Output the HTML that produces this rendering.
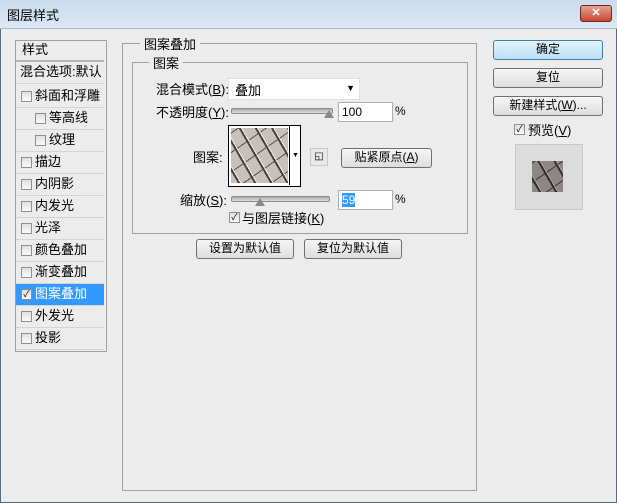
<html><head><style>
body{margin:0;width:617px;height:503px;overflow:hidden;background:#ececec;font-family:"Liberation Sans","Noto Sans CJK SC",sans-serif;font-size:12px;color:#000;position:relative}
.a{position:absolute}
.title{left:0;top:0;width:617px;height:28px;background:linear-gradient(#c9dbee,#dbe7f4);border-bottom:1px solid #aab9c9}
.win{left:0;top:0;width:615px;height:501px;border:1px solid #5a6a7a}
.btn{position:absolute;height:18px;border:1px solid #707070;border-radius:3px;background:linear-gradient(#f6f6f6,#dedede);text-align:center;line-height:17px;font-size:12px}
.cb{position:absolute;width:9px;height:9px;border:1px solid #8e8f8f;background:linear-gradient(#e0e0e0,#fafafa)}
.li{position:absolute;left:16px;width:88px;height:21px;border-bottom:1px solid #d4d4d4;line-height:20px}
.grp{position:absolute;border:1px solid #a0a0a0}
.lg{position:absolute;background:#ececec;padding:0 4px;font-size:13px}
.pat{background-color:#c9c0bb;background-image:repeating-linear-gradient(60deg,transparent 0 6px,#4a403b 6px 8px,#f2eeea 8px 9px,transparent 9px 14px),repeating-linear-gradient(-35deg,transparent 0 9px,#5a4f4a 9px 10px,transparent 10px 16px)}
.sl{position:absolute;height:4px;border:1px solid #8a8a8a;border-radius:2px;background:linear-gradient(#aaa,#ddd)}
.inp{position:absolute;height:18px;background:#fff;border:1px solid #abadb3;line-height:18px;padding-left:3px}
</style></head><body>
<div class="a win"></div>
<div class="a title"></div>
<div class="a" style="left:7px;top:5px;font-size:13px">图层样式</div>
<div class="a" style="left:580px;top:5px;width:30px;height:15px;border:1px solid #6b2a22;border-radius:3px;background:linear-gradient(#e8a293,#c8452f);color:#fff;text-align:center;line-height:15px;font-weight:bold;font-size:11px">✕</div>

<div class="a" style="left:15px;top:40px;width:90px;height:310px;border:1px solid #a0a0a0;background:#ececec"></div>
<div class="li" style="top:40px;padding-left:6px;width:82px;border-bottom:2px solid #b5b5b5;height:20px;font-size:13px">样式</div>
<div class="li" style="top:62px;padding-left:4px;width:84px;font-size:13px">混合选项:默认</div>
<div class="li" style="top:86px"><span class="cb" style="left:5px;top:5px"></span><span style="position:absolute;left:19px;font-size:13px">斜面和浮雕</span></div>
<div class="li" style="top:108px"><span class="cb" style="left:19px;top:5px"></span><span style="position:absolute;left:33px;font-size:13px">等高线</span></div>
<div class="li" style="top:130px"><span class="cb" style="left:19px;top:5px"></span><span style="position:absolute;left:33px;font-size:13px">纹理</span></div>
<div class="li" style="top:152px"><span class="cb" style="left:5px;top:5px"></span><span style="position:absolute;left:19px;font-size:13px">描边</span></div>
<div class="li" style="top:174px"><span class="cb" style="left:5px;top:5px"></span><span style="position:absolute;left:19px;font-size:13px">内阴影</span></div>
<div class="li" style="top:196px"><span class="cb" style="left:5px;top:5px"></span><span style="position:absolute;left:19px;font-size:13px">内发光</span></div>
<div class="li" style="top:218px"><span class="cb" style="left:5px;top:5px"></span><span style="position:absolute;left:19px;font-size:13px">光泽</span></div>
<div class="li" style="top:240px"><span class="cb" style="left:5px;top:5px"></span><span style="position:absolute;left:19px;font-size:13px">颜色叠加</span></div>
<div class="li" style="top:262px"><span class="cb" style="left:5px;top:5px"></span><span style="position:absolute;left:19px;font-size:13px">渐变叠加</span></div>
<div class="li" style="top:284px;background:#3399ff;color:#fff"><span class="cb" style="left:5px;top:5px;color:#000;font-size:9px;line-height:9px;text-align:center">✓</span><span style="position:absolute;left:19px;font-size:13px">图案叠加</span></div>
<div class="li" style="top:306px"><span class="cb" style="left:5px;top:5px"></span><span style="position:absolute;left:19px;font-size:13px">外发光</span></div>
<div class="li" style="top:328px"><span class="cb" style="left:5px;top:5px"></span><span style="position:absolute;left:19px;font-size:13px">投影</span></div>

<div class="grp" style="left:122px;top:43px;width:353px;height:446px"></div>
<div class="lg" style="left:140px;top:34px">图案叠加</div>
<div class="grp" style="left:132px;top:62px;width:334px;height:170px"></div>
<div class="lg" style="left:149px;top:53px">图案</div>

<div class="a" style="left:156px;top:79px;font-size:13px">混合模式(<u>B</u>):</div>
<div class="a" style="left:228px;top:78px;width:130px;height:20px;background:#fff;border:1px solid #e0e0e0"><span style="position:absolute;left:6px;top:1px;font-size:13px">叠加</span><span style="position:absolute;right:4px;top:4px;font-size:9px">▼</span></div>
<div class="a" style="left:156px;top:102px;font-size:13px">不透明度(<u>Y</u>):</div>
<div class="sl" style="left:231px;top:108px;width:100px"></div>
<div class="a" style="left:324px;top:110px;width:0;height:0;border-left:5px solid transparent;border-right:5px solid transparent;border-bottom:8px solid #888"></div>
<div class="inp" style="left:338px;top:102px;width:50px">100</div>
<div class="a" style="left:395px;top:104px">%</div>

<div class="a" style="left:193px;top:147px;font-size:13px">图案:</div>
<div class="a" style="left:228px;top:125px;width:71px;height:60px;border:1px solid #000;background:#fff"></div>
<div class="a pat" style="left:231px;top:128px;width:57px;height:55px"></div>
<div class="a" style="left:289px;top:126px;width:1px;height:59px;background:#000"></div>
<div class="a" style="left:292px;top:152px;font-size:7px">▼</div>
<div class="a" style="left:310px;top:148px;width:16px;height:16px;border:1px solid #c8c8c8;background:#e8e8e8;text-align:center;font-size:10px;line-height:16px">◱</div>
<div class="btn" style="left:341px;top:148px;width:89px">贴紧原点(<u>A</u>)</div>

<div class="a" style="left:180px;top:190px;font-size:13px">缩放(<u>S</u>):</div>
<div class="sl" style="left:231px;top:196px;width:97px"></div>
<div class="a" style="left:255px;top:198px;width:0;height:0;border-left:5px solid transparent;border-right:5px solid transparent;border-bottom:8px solid #888"></div>
<div class="inp" style="left:338px;top:190px;width:50px"><span style="background:#3399ff;color:#fff">59</span></div>
<div class="a" style="left:395px;top:192px">%</div>
<div class="cb" style="left:229px;top:212px;font-size:9px;line-height:9px;text-align:center">✓</div>
<div class="a" style="left:242px;top:208px;font-size:13px">与图层链接(<u>K</u>)</div>

<div class="btn" style="left:196px;top:239px;width:96px">设置为默认值</div>
<div class="btn" style="left:304px;top:239px;width:96px">复位为默认值</div>

<div class="btn" style="left:493px;top:40px;width:108px;border-color:#3c7fb1;background:linear-gradient(#e5f4fc,#b9e0f5)">确定</div>
<div class="btn" style="left:493px;top:68px;width:108px">复位</div>
<div class="btn" style="left:493px;top:96px;width:108px">新建样式(<u>W</u>)...</div>
<div class="cb" style="left:514px;top:124px;font-size:9px;line-height:9px;text-align:center">✓</div>
<div class="a" style="left:528px;top:120px;font-size:13px">预览(<u>V</u>)</div>
<div class="a" style="left:515px;top:144px;width:66px;height:64px;border:1px solid #c8c8c8;background:#dcdcdc"></div>
<div class="a pat" style="left:532px;top:161px;width:31px;height:31px;filter:brightness(.7)"></div>
</body></html>
